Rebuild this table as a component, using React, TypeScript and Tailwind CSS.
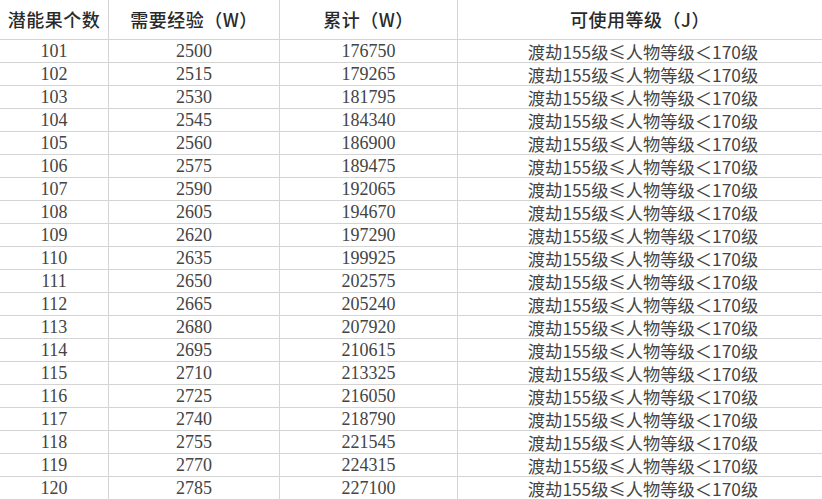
const needs = Array.from({ length: 20 }, (_, i) => 2500 + i * 15);

const rows = needs.reduce<{ level: number; need: number; total: number }[]>(
  (acc, need, i) => {
    const total = i === 0 ? 176750 : acc[i - 1].total + need;
    acc.push({ level: 101 + i, need, total });
    return acc;
  },
  []
);

const cell = "flex items-center justify-center border-b border-[#d4d4d4]";
const sep = "border-r border-[#d4d4d4]";
const cjk = { fontFamily: '"Noto Sans CJK SC", sans-serif' };

export default function App() {
  return (
    <div
      className="w-[822px] h-[500px] overflow-hidden bg-white text-[#444]"
      style={{ fontFamily: '"Liberation Serif", "Noto Sans CJK SC", serif' }}
    >
      <div className="grid grid-cols-[109px_171px_178px_1fr]">
        {/* Header */}
        {["潜能果个数", "需要经验（W）", "累计（W）", "可使用等级（J）"].map((h, i) => (
          <div
            key={h}
            className={`${cell} ${i < 3 ? sep : ""} h-[40px] text-[18px] font-medium text-[#2a2a2a] tracking-[0.5px]`}
            style={cjk}
          >
            {h}
          </div>
        ))}

        {/* Rows */}
        {rows.map((r) => (
          <div key={r.level} className="contents">
            <div className={`${cell} ${sep} h-[23px] text-[18px]`}>{r.level}</div>
            <div className={`${cell} ${sep} h-[23px] text-[18px]`}>{r.need}</div>
            <div className={`${cell} ${sep} h-[23px] text-[18px]`}>{r.total}</div>
            <div className={`${cell} h-[23px] text-[17.3px] pl-[6px] leading-[21px]`} style={cjk}>
              {"渡劫155级≤人物等级＜170级"}
            </div>
          </div>
        ))}
      </div>
    </div>
  );
}
